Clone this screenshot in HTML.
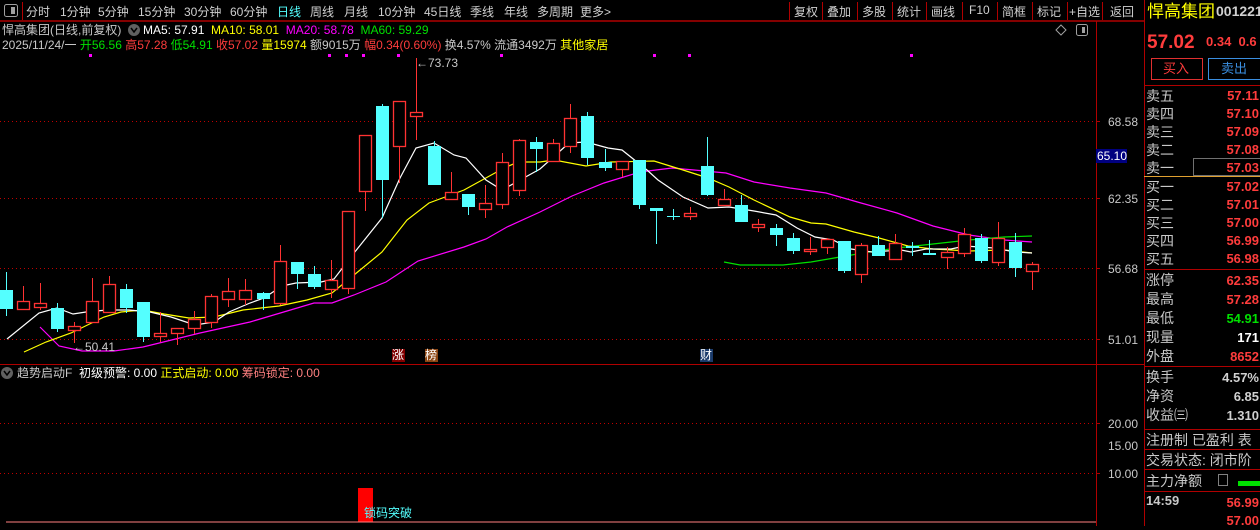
<!DOCTYPE html>
<html><head><meta charset="utf-8"><style>
*{margin:0;padding:0;box-sizing:border-box}
body{width:1260px;height:526px;background:#000;overflow:hidden;position:relative;font-family:"Liberation Sans","Noto Sans CJK SC",sans-serif;font-size:12px;color:#c8c8c8}
.a{position:absolute;white-space:nowrap;line-height:14px}
.tb{position:absolute;top:3px;font-size:12px;color:#d0d0d0}
.r{color:#ff3c3c}.g{color:#00e000}.y{color:#ffff00}.m{color:#ff00ff}.w{color:#fff}.c{color:#54ffff}
.rl{position:absolute;left:1146px;font-size:14px;color:#c8c8c8;line-height:18px;white-space:nowrap}
.rv{position:absolute;right:1px;font-size:13px;font-weight:bold;line-height:18px;text-align:right}
</style></head><body>
<svg width="1260" height="526" style="position:absolute;left:0;top:0">
<line x1="0" y1="21" x2="1144" y2="21" stroke="#b00000" stroke-width="1.5"/>
<line x1="1144.5" y1="0" x2="1144.5" y2="526" stroke="#b00000"/>
<line x1="1096.5" y1="21" x2="1096.5" y2="526" stroke="#b00000"/>
<line x1="0" y1="364.5" x2="1144" y2="364.5" stroke="#b00000"/>
<g stroke="#b00000">
<line x1="22.5" y1="2" x2="22.5" y2="20"/>
<line x1="789.5" y1="2" x2="789.5" y2="20"/><line x1="822.5" y1="2" x2="822.5" y2="20"/><line x1="857.5" y1="2" x2="857.5" y2="20"/><line x1="892.5" y1="2" x2="892.5" y2="20"/><line x1="926.5" y1="2" x2="926.5" y2="20"/><line x1="962.5" y1="2" x2="962.5" y2="20"/><line x1="997.5" y1="2" x2="997.5" y2="20"/><line x1="1032.5" y1="2" x2="1032.5" y2="20"/><line x1="1067.5" y1="2" x2="1067.5" y2="20"/><line x1="1102.5" y1="2" x2="1102.5" y2="20"/>
</g>
<g stroke="#b00000">
<line x1="1144" y1="85.5" x2="1260" y2="85.5"/>
<line x1="1144" y1="269.5" x2="1260" y2="269.5"/>
<line x1="1144" y1="366.5" x2="1260" y2="366.5"/>
<line x1="1144" y1="429.5" x2="1260" y2="429.5"/>
<line x1="1144" y1="449.5" x2="1260" y2="449.5"/>
<line x1="1144" y1="469.5" x2="1260" y2="469.5"/>
<line x1="1144" y1="491.5" x2="1260" y2="491.5"/>
</g>
<line x1="1144" y1="176.5" x2="1260" y2="176.5" stroke="#e0a030"/>
<rect x="1193.5" y="158.5" width="67" height="17" fill="none" stroke="#707070"/>
<rect x="1151.5" y="58.5" width="51" height="21" fill="none" stroke="#e03030"/>
<rect x="1208.5" y="58.5" width="52" height="21" fill="none" stroke="#3a8ee0"/>
<g stroke="#c00000" stroke-dasharray="1,3">
<line x1="0" y1="121.5" x2="1096" y2="121.5"/><line x1="0" y1="198.5" x2="1096" y2="198.5"/><line x1="0" y1="268.5" x2="1096" y2="268.5"/><line x1="0" y1="339.5" x2="1096" y2="339.5"/>
<line x1="0" y1="423.5" x2="1096" y2="423.5"/><line x1="0" y1="473.5" x2="1096" y2="473.5"/>
</g>
<g stroke="#b00000"><line x1="1096" y1="121.5" x2="1100" y2="121.5"/><line x1="1096" y1="198.5" x2="1100" y2="198.5"/><line x1="1096" y1="268.5" x2="1100" y2="268.5"/><line x1="1096" y1="339.5" x2="1100" y2="339.5"/><line x1="1096" y1="423.5" x2="1100" y2="423.5"/><line x1="1096" y1="473.5" x2="1100" y2="473.5"/></g>
<rect x="1096" y="149" width="31" height="14" fill="#000080"/>
<g fill="#ff00ff"><rect x="89" y="54" width="3" height="3"/><rect x="328" y="54" width="3" height="3"/><rect x="345" y="54" width="3" height="3"/><rect x="362" y="54" width="3" height="3"/><rect x="397" y="54" width="3" height="3"/><rect x="500" y="54" width="3" height="3"/><rect x="653" y="54" width="3" height="3"/><rect x="688" y="54" width="3" height="3"/><rect x="910" y="54" width="3" height="3"/></g>
<polyline fill="none" stroke="#ff00ff" stroke-width="1.2" points="40,327 59,346 82,351 114,351 143,347 200,333 250,322 314,303 332,303 354,295 386,282 418,261 464,247 486,239 507,227 540,212 572,196 604,183 640,172 672,168 694,170 726,173 754,182 790,188 826,193 861,203 897,213 933,226 969,235 1004,240 1032,242"/>
<polyline fill="none" stroke="#00e000" stroke-width="1.2" points="724,262 740,265 783,265 811,262 840,257 869,252 897,248 933,244 969,240 1004,237 1032,236"/>
<polyline fill="none" stroke="#ffff00" stroke-width="1.2" points="24,352 46,342 71,333 104,317 121,312 143,310 164,314 189,318 214,317 243,310 279,306 307,300 332,293 354,275 382,252 407,220 429,203 464,190 504,168 518,162 540,162 554,160 586,166 611,162 654,161 683,170 708,178 729,187 754,200 790,217 811,223 826,224 854,232 879,238 908,246 933,249 969,251 1004,250 1032,253"/>
<polyline fill="none" stroke="#ffffff" stroke-width="1.2" points="7,339 39,313 57,308 73,314 86,312 107,310 129,310 150,312 171,317 195,325 214,322 229,312 250,303 264,298 282,286 296,283 321,282 334,279 354,253 382,218 400,178 416,148 434,143 454,155 466,158 486,180 502,190 540,169 569,143 586,142 608,148 622,150 647,170 658,180 683,197 708,208 729,207 754,211 776,215 797,228 815,237 833,240 851,249 872,252 901,250 911,252 926,249 951,249 965,246 994,248 1015,252 1032,253"/>
<g id="candles"></g>
<rect x="358" y="488" width="15" height="34" fill="#ff0000"/>
<line x1="6" y1="522" x2="1096" y2="522" stroke="#ff8080"/>
<circle cx="7" cy="373" r="6" fill="#606060"/><path d="M4 371 L7 375 L10 371" stroke="#000" fill="none" stroke-width="1.5"/>
<circle cx="134" cy="30" r="6" fill="#606060"/><path d="M131 28 L134 32 L137 28" stroke="#000" fill="none" stroke-width="1.5"/>
<rect x="4.5" y="4.5" width="13" height="12" rx="2" fill="none" stroke="#a0a0a0"/><rect x="11" y="7" width="4" height="7" fill="#a0a0a0"/>
<path d="M1061 25 L1066 30 L1061 35 L1056 30Z" fill="none" stroke="#a0a0a0"/>
<rect x="1076.5" y="24.5" width="11" height="11" rx="2" fill="none" stroke="#a0a0a0"/><rect x="1082" y="27" width="3" height="6" fill="#a0a0a0"/>
<rect x="1238" y="481" width="22" height="5" fill="#00e000"/>
<rect x="1218.5" y="474.5" width="9" height="11" fill="none" stroke="#808080"/>
<rect x="392" y="349" width="13" height="13" fill="#800000"/><rect x="425" y="349" width="13" height="13" fill="#8b4513"/><rect x="700" y="349" width="13" height="13" fill="#1a3a6a"/>
</svg>
<script>
var d=[["c",290,309,272,316],["r",301,309,286,309],["r",303,307,283,310],["c",308,329,303,332],["r",326,330,322,343],["r",301,322,278,323],["r",284,312,276,313],["c",289,308,284,313],["c",302,337,302,342],["r",333,336,312,342],["r",328,333,328,345],["r",319,328,311,334],["r",296,322,294,328],["r",291,299,278,307],["r",290,299,279,305],["c",293,299,292,310],["r",261,303,245,305],["c",262,274,262,289],["c",274,287,266,289],["r",280,289,260,298],["r",211,288,211,294],["r",135,191,135,211],["c",106,180,104,218],["r",101,146,101,183],["r",112,116,58,140],["c",146,185,141,185],["r",192,199,172,199],["c",194,207,194,215],["r",203,209,185,218],["r",162,204,153,209],["r",140,190,139,196],["c",142,149,137,172],["r",143,161,139,161],["r",118,146,104,153],["c",116,158,112,165],["c",162,168,149,171],["r",161,169,161,177],["c",160,205,160,209],["c",208,211,208,244],["c",216,217,209,220],["r",213,216,207,220],["c",166,195,137,196],["r",199,205,189,206],["c",205,222,195,222],["r",224,227,219,232],["c",228,235,224,246],["c",238,251,233,254],["r",249,251,237,255],["r",239,247,238,254],["c",241,271,241,273],["r",245,274,243,283],["c",245,256,236,256],["r",243,259,234,260],["c",246,248,242,256],["c",253,255,240,255],["r",252,257,247,269],["r",234,253,228,257],["c",238,261,234,263],["r",238,262,222,266],["c",242,268,233,277],["r",264,271,262,290]];
var s="";for(var i=0;i<d.length;i++){var k=d[i],x=Math.round(6+i*17.1),col=k[0]=="r"?"#ff3232":"#54ffff";
s+='<line x1="'+(x+.5)+'" y1="'+k[3]+'" x2="'+(x+.5)+'" y2="'+k[4]+'" stroke="'+col+'"/>';
var h=Math.max(k[2]-k[1],1);
if(k[0]=="r")s+='<rect x="'+(x-5.5)+'" y="'+(k[1]+.5)+'" width="12" height="'+h+'" fill="#000" stroke="'+col+'" stroke-width="1.3"/>';
else s+='<rect x="'+(x-6)+'" y="'+k[1]+'" width="13" height="'+h+'" fill="'+col+'"/>';}
document.getElementById("candles").innerHTML=s;
</script>
<span class="tb" style="left:26px">分时</span><span class="tb" style="left:60px">1分钟</span><span class="tb" style="left:98px">5分钟</span><span class="tb" style="left:138px">15分钟</span><span class="tb" style="left:184px">30分钟</span><span class="tb" style="left:230px">60分钟</span><span class="tb c" style="left:277px">日线</span><span class="tb" style="left:310px">周线</span><span class="tb" style="left:344px">月线</span><span class="tb" style="left:378px">10分钟</span><span class="tb" style="left:424px">45日线</span><span class="tb" style="left:470px">季线</span><span class="tb" style="left:504px">年线</span><span class="tb" style="left:537px">多周期</span><span class="tb" style="left:580px">更多&gt;</span>
<span class="tb" style="left:794px">复权</span><span class="tb" style="left:827px">叠加</span><span class="tb" style="left:862px">多股</span><span class="tb" style="left:897px">统计</span><span class="tb" style="left:931px">画线</span><span class="tb" style="left:969px">F10</span><span class="tb" style="left:1002px">简框</span><span class="tb" style="left:1037px">标记</span><span class="tb" style="left:1069px">+自选</span><span class="tb" style="left:1110px">返回</span>
<div class="a" style="left:2px;top:23px">悍高集团(日线,前复权)</div>
<div class="a" style="left:143px;top:23px"><span class="w">MA5: 57.91</span>&nbsp; <span class="y">MA10: 58.01</span>&nbsp; <span class="m">MA20: 58.78</span>&nbsp; <span class="g">MA60: 59.29</span></div>
<div class="a" style="left:2px;top:38px">2025/11/24/一 <span class="g">开56.56</span> <span class="r">高57.28</span> <span class="g">低54.91</span> <span class="r">收57.02</span> <span class="y">量15974</span> 额9015万 <span class="r">幅0.34(0.60%)</span> 换4.57% 流通3492万 <span class="y">其他家居</span></div>
<div class="a" style="left:416px;top:56px;color:#c8c8c8">←73.73</div>
<div class="a" style="left:73px;top:340px;color:#c8c8c8">←50.41</div>
<div class="a" style="left:392px;top:348px;color:#fff">涨</div><div class="a" style="left:425px;top:348px;color:#fff">榜</div><div class="a" style="left:700px;top:348px;color:#fff">财</div>
<div class="a" style="left:1108px;top:115px">68.58</div><div class="a" style="left:1097px;top:149px;color:#fff">65.10</div><div class="a" style="left:1108px;top:192px">62.35</div><div class="a" style="left:1108px;top:262px">56.68</div><div class="a" style="left:1108px;top:333px">51.01</div>
<div class="a" style="left:1108px;top:417px">20.00</div><div class="a" style="left:1108px;top:439px">15.00</div><div class="a" style="left:1108px;top:467px">10.00</div>
<div class="a" style="left:17px;top:366px">趋势启动F&nbsp; <span class="w">初级预警: 0.00</span> <span class="y">正式启动: 0.00</span> <span style="color:#ff8080">筹码锁定: 0.00</span></div>
<div class="a c" style="left:364px;top:506px">锁码突破</div>
<div class="a y" style="left:1147px;top:3px;font-size:17px;line-height:18px">悍高集团</div>
<div class="a" style="left:1216px;top:4px;font-size:14px;font-weight:bold;color:#d0d0d0">001221</div>
<div class="a r" style="left:1147px;top:33px;font-size:19px;font-weight:bold;line-height:20px">57.02</div>
<div class="a r" style="left:1206px;top:35px;font-size:13px;font-weight:bold">0.34&nbsp; 0.6</div>
<div class="a r" style="left:1163px;top:62px;font-size:13px">买入</div>
<div class="a" style="left:1221px;top:62px;font-size:13px;color:#3a8ee0">卖出</div>
<div class="rl" style="top:87px">卖五<br>卖四<br>卖三<br>卖二<br>卖一</div>
<div class="rl" style="top:178px">买一<br>买二<br>买三<br>买四<br>买五</div>
<div class="rl" style="top:271px;line-height:19px">涨停<br>最高<br>最低<br>现量<br>外盘</div>
<div class="rl" style="top:368px;line-height:19px">换手<br>净资<br>收益㈢</div>
<div class="rl" style="top:431px">注册制 已盈利 表</div>
<div class="rl" style="top:451px">交易状态: 闭市阶</div>
<div class="rl" style="top:472px">主力净额</div>
<div class="a" style="left:1146px;top:494px;font-size:13px;font-weight:bold">14:59</div>
<div class="rv r" style="top:87px">57.11<br>57.10<br>57.09<br>57.08<br>57.03</div>
<div class="rv r" style="top:178px">57.02<br>57.01<br>57.00<br>56.99<br>56.98</div>
<div class="rv" style="top:271px;line-height:19px"><span class="r">62.35</span><br><span class="r">57.28</span><br><span class="g">54.91</span><br><span class="w">171</span><br><span class="r">8652</span></div>
<div class="rv" style="top:368px;line-height:19px;color:#d0d0d0">4.57%<br>6.85<br>1.310</div>
<div class="rv r" style="top:494px;line-height:18px">56.99<br>57.00</div>
</body></html>
